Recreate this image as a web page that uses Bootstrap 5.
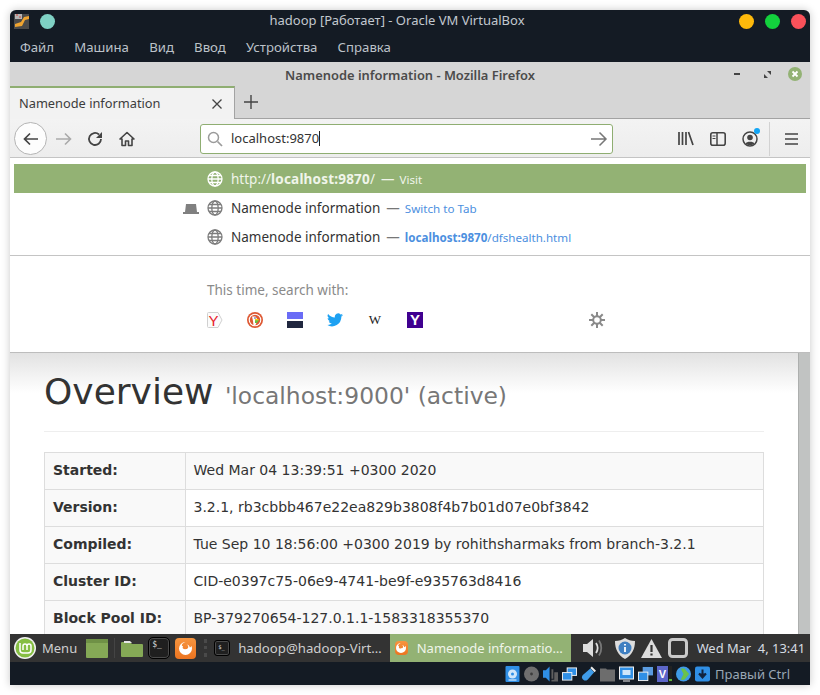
<!DOCTYPE html>
<html lang="en">
<head>
  <meta charset="UTF-8">
  <title>hadoop [Работает] - Oracle VM VirtualBox</title>
  <meta name="viewport" content="width=device-width, initial-scale=1">
  <link href="https://cdn.jsdelivr.net/npm/bootstrap@5.3.3/dist/css/bootstrap.min.css" rel="stylesheet">
  <style>
    html, body { height: 100%; }
    body { background: #fff; overflow: hidden; font-family: "Noto Sans", sans-serif; font-size: 13px; }
    svg { display: block; flex: none; }
    .vm-window { position: relative; width: 800px; height: 675px; margin: 10px; border-radius: 6px 6px 0 0; box-shadow: 0 0 9px rgba(0,0,0,.22); overflow: hidden; background: #141b24; }
    .vm-title { height: 26px; color: #c2c8cf; padding: 0 4px 3px; position: relative; }
    .vm-title-text { position: absolute; left: 0; right: 26px; top: 0; text-align: center; line-height: 20px; }
    .dot { width: 15px; height: 15px; border-radius: 50%; }
    .vm-menu { height: 26px; color: #bcc2c9; padding-left: 10px; gap: 20.2px; line-height: 22px; font-size: 13.2px; }
    .ff-title { height: 24px; background: #d6d6d6; color: #4b4b4b; font-weight: 600; position: relative; line-height: 26px; text-align: center; font-size: 12.9px; }
    .ff-ctrls { position: absolute; right: 8px; top: 5px; gap: 17px; }
    .ff-tabs { height: 33px; background: #d6d6d6; border-bottom: 1px solid #a3a3a3; }
    .ff-tab { width: 225px; height: 33px; background: #f2f2f2; border-top: 2px solid #8fae72; border-right: 1px solid #a3a3a3; padding: 0 12px 0 9px; color: #3c3c3c; font-size: 12.8px; }
    .ff-toolbar { height: 39px; background: linear-gradient(#f3f3f3, #ededed); border-bottom: 1px solid #c4c4c4; position: relative; padding: 1px 0 0 4px; }
    .back-btn { width: 33px; height: 33px; border-radius: 50%; border: 1px solid #b4b4b4; background: #fdfdfd; }
    .url-box { width: 413px; height: 30px; margin-left: 65px; background: #fff; border: 1px solid #8fae72; border-radius: 3px; padding: 0 4px 0 6px; color: #333; font-size: 13px; }
    .url-caret { display: inline-block; width: 1px; height: 15px; background: #222; vertical-align: -3px; }
    .tool-sep { width: 1px; height: 34px; background: #d2d2d2; }
    .ff-page { height: 476px; background: #fff; position: relative; overflow: hidden; }
    .page-scroll { position: absolute; right: 0; top: 0; bottom: 0; width: 12px; background: #c1c3c2; border-left: 1px solid #adafae; }
    .page-shade { height: 40px; background: linear-gradient(#e2e2e2, #fff); position: absolute; left: 0; right: 12px; top: 195px; }
    .page-body { position: absolute; left: 34px; width: 720px; top: 194px; font-family: "DejaVu Sans", sans-serif; color: #333; }
    .page-head { margin: 20px 0 20px; padding-bottom: 15px; border-bottom: 1px solid #eee; font-size: 36px; line-height: 40px; font-weight: 400; font-family: inherit; }
    .page-head small { font-size: 23.4px; color: #777; font-weight: 400; }
    .info-tbl { width: 720px; margin: 0; font-size: 14px; color: #333; table-layout: fixed; }
    .info-tbl th, .info-tbl td { border: 1px solid #ddd; padding: 7px 8px 9px; height: 37px; line-height: 20px; font-weight: 400; background: #fff; box-shadow: none; color: #333; }
    .info-tbl td { padding-left: 7.5px; }
    .info-tbl th { width: 141px; font-weight: 700; background: #f9f9f9; }
    .info-tbl tr:nth-child(odd) td { background: #f9f9f9; }
    .url-drop { position: absolute; left: 0; right: 0; top: 0; height: 195px; background: #fff; border-bottom: 1px solid #bdbdbd; padding: 6px 4px 0; z-index: 5; }
    .drop-row { height: 29px; padding-left: 193px; gap: 6px; color: #333; position: relative; font-size: 13.5px; }
    .drop-row > svg:not(.tab-ind) { margin-right: 2px; }
    .drop-row > span { margin-top: 2px; }
    .drop-row.is-on { background: #93b274; color: #f0f5ea; }
    .is-on b { letter-spacing: .2px; }
    .drop-dash { color: #777; font-size: 13.5px; }
    .is-on .drop-dash { color: #f0f5ea; }
    .drop-act { font-size: 11.6px; color: #4c8fe0; margin-left: -1px; }
    .is-on .drop-act { color: #f0f5ea; }
    .tab-ind { position: absolute; left: 169px; top: 11px; }
    .drop-sep { height: 1px; background: #c4c4c4; margin: 4px -4px 0; }
    .search-lbl { color: #8a8a8a; margin: 24px 0 0 193px; line-height: 20px; font-size: 13.5px; }
    .search-row { margin: 12px 0 0 193px; position: relative; width: 400px; gap: 24px; }
    .gear-ic { position: absolute; left: 382px; top: 0; }
    .wiki-g { width: 16px; height: 16px; font-family: "Liberation Serif", serif; font-size: 13px; line-height: 16px; text-align: center; color: #222; }
    .yahoo-g { width: 16px; height: 16px; background: #400090; color: #fff; font-weight: 700; line-height: 16px; text-align: center; font-size: 15px; font-family: "Liberation Sans", sans-serif; }
    .mint-panel { height: 28px; background: #333; color: #cfcfcf; position: relative; }
    .mint-panel span { margin-top: 2px; }
    .mint-task { height: 28px; padding: 0 8px 0 5px; gap: 8px; font-size: 13.2px; }
    .mint-task.is-active { background: #93b274; color: #f0f5ea; font-size: 13px; gap: 9px; }
    .mint-clock { position: absolute; right: 5px; top: 0; line-height: 28px; white-space: pre; color: #d6dce2; font-size: 12.9px; }
    .term-ic { background: #1f1f1f; border: 1px solid #000; border-radius: 5px; color: #ddd; font-family: "DejaVu Sans Mono", monospace; font-size: 8px; line-height: 8px; padding: 3px 0 0 3px; box-shadow: inset 0 0 0 1px #4a4a4a; }
    .term-ic.is-small { width: 16px; height: 16px; font-size: 5.5px; padding: 2px 0 0 3px; border-radius: 3px; }
    .ff-ic { border-radius: 4px; background: linear-gradient(#f7953f, #ec7420); }
    .vbox-status { height: 23px; color: #9aa7b4; padding-right: 20px; gap: 4px; }
    .vbox-status svg { width: 15px; height: 16px; }
    .vbox-status span { margin: 2px 0 0 1px; font-size: 13px; }
  </style>
</head>
<body>

  <div class="vm-window d-flex flex-column">

    <!-- VirtualBox title and menu -->
    <div class="vm-title d-flex align-items-center">
      <svg width="15" height="15" viewBox="0 0 15 15"><rect width="15" height="15" fill="#4a4a4a"/><rect x="1" y="0" width="7" height="5" fill="#b5b5b5"/><path d="M2 1h2M5 3h2" stroke="#d0453a"/><path d="M15 2 10 3 7 8 1 10v3l7-1 3-6 4-1z" fill="#efa430"/></svg>
      <div class="dot" style="background:#7fd1c4;margin-left:11px"></div>
      <div class="vm-title-text">hadoop [Работает] - Oracle VM VirtualBox</div>
      <div class="d-flex ms-auto" style="gap:11px;margin-right:.5px">
        <div class="dot" style="background:#fdb90b"></div>
        <div class="dot" style="background:#13d13d"></div>
        <div class="dot" style="background:#f9515a"></div>
      </div>
    </div>
    <div class="vm-menu d-flex">
      <span>Файл</span><span>Машина</span><span>Вид</span><span>Ввод</span><span>Устройства</span><span>Справка</span>
    </div>

    <!-- Firefox chrome -->
    <div class="ff-title">
      Namenode information - Mozilla Firefox
      <div class="ff-ctrls d-flex align-items-center">
        <svg width="13" height="14" viewBox="0 0 13 14"><rect x="0" y="6" width="6" height="2" fill="#444"/></svg>
        <svg width="7" height="7" viewBox="0 0 7 7"><path d="M3 0h4v4zM0 3l4 4H0z" fill="#444"/></svg>
        <svg width="14" height="14" viewBox="0 0 14 14"><circle cx="7" cy="7" r="7" fill="#93b274"/><path d="M4.500 4.500l5 5m0-5-5 5" stroke="#fff" stroke-width="1.800"/></svg>
      </div>
    </div>
    <div class="ff-tabs d-flex">
      <div class="ff-tab d-flex align-items-center justify-content-between">
        <span>Namenode information</span>
        <svg width="10" height="10" viewBox="0 0 10 10"><path d="M.5.5l9 9m0-9-9 9" stroke="#444" stroke-width="1.300"/></svg>
      </div>
      <svg class="align-self-center" style="margin-left:9px" width="14" height="14" viewBox="0 0 14 14"><path d="M7 0v14M0 7h14" stroke="#444" stroke-width="1.400"/></svg>
    </div>
    <div class="ff-toolbar d-flex align-items-center">
      <div class="back-btn d-flex align-items-center justify-content-center">
        <svg width="16" height="14" viewBox="0 0 16 14"><path d="M15 7H2M7 1.500 1.500 7 7 12.500" fill="none" stroke="#444" stroke-width="1.700"/></svg>
      </div>
      <svg class="ms-2" width="17" height="14" viewBox="0 0 17 14"><path d="M1 7h14M10 1.500 15.500 7 10 12.500" fill="none" stroke="#aaa" stroke-width="1.600"/></svg>
      <svg style="margin-left:15px" width="16" height="16" viewBox="0 0 16 16"><path d="M14 8a6 6 0 1 1-2-4.500" fill="none" stroke="#444" stroke-width="1.800"/><path d="M15 1v6H9z" fill="#444"/></svg>
      <svg style="margin-left:16px" width="16" height="16" viewBox="0 0 16 16"><path d="M8 1.500 1 8h2v6.500h3.500V10h3v4.500H13V8h2z" fill="none" stroke="#444" stroke-width="1.600" stroke-linejoin="round"/></svg>
      <div class="url-box d-flex align-items-center">
        <svg width="16" height="16" viewBox="0 0 16 16"><circle cx="6.500" cy="6.500" r="5" fill="none" stroke="#9b9b9b" stroke-width="1.500"/><path d="M10.500 10.500 15 15" stroke="#9b9b9b" stroke-width="1.700"/></svg>
        <span class="ms-2">localhost:9870<span class="url-caret"></span></span>
        <svg class="ms-auto" width="18" height="16" viewBox="0 0 18 16"><path d="M1 8h15M9.500 1.500 16 8l-6.500 6.500" fill="none" stroke="#777" stroke-width="1.500"/></svg>
      </div>
      <svg style="margin-left:65px" width="16" height="15" viewBox="0 0 16 15"><path d="M1 1v13M4.500 1v13M8 1v13M10.500 1l4.500 13" fill="none" stroke="#444" stroke-width="1.700"/></svg>
      <svg style="margin-left:16px" width="16" height="14" viewBox="0 0 16 14"><rect x=".8" y=".8" width="14.400" height="12.400" rx="2" fill="none" stroke="#444" stroke-width="1.600"/><path d="M7 1v12" stroke="#444" stroke-width="1.500"/><path d="M2.500 4h3M2.500 6.500h3" stroke="#444"/></svg>
      <div class="position-relative" style="margin-left:16px">
        <svg width="16" height="16" viewBox="0 0 16 16"><circle cx="8" cy="8" r="7" fill="none" stroke="#444" stroke-width="1.500"/><circle cx="8" cy="6.500" r="2.800" fill="#444"/><path d="M3.500 12.500c1-2.500 8-2.500 9 0-2 2-7 2-9 0z" fill="#444"/></svg>
        <span class="position-absolute" style="width:6px;height:6px;border-radius:50%;background:#12a5f5;left:12px;top:-3px"></span>
      </div>
      <div class="tool-sep" style="margin-left:11px"></div>
      <svg style="margin-left:15px" width="13" height="12" viewBox="0 0 13 12"><path d="M0 1h13M0 6h13M0 11h13" stroke="#444" stroke-width="1.700"/></svg>
    </div>

    <!-- Page behind the address bar dropdown -->
    <div class="ff-page">
      <div class="page-shade"></div>
      <div class="page-body">
        <h1 class="page-head">Overview <small>'localhost:9000' (active)</small></h1>
        <table class="table info-tbl">
          <tbody>
            <tr><th>Started:</th><td>Wed Mar 04 13:39:51 +0300 2020</td></tr>
            <tr><th>Version:</th><td>3.2.1, rb3cbbb467e22ea829b3808f4b7b01d07e0bf3842</td></tr>
            <tr><th>Compiled:</th><td>Tue Sep 10 18:56:00 +0300 2019 by rohithsharmaks from branch-3.2.1</td></tr>
            <tr><th>Cluster ID:</th><td>CID-e0397c75-06e9-4741-be9f-e935763d8416</td></tr>
            <tr><th>Block Pool ID:</th><td>BP-379270654-127.0.1.1-1583318355370</td></tr>
          </tbody>
        </table>
      </div>
      <div class="page-scroll"></div>

      <!-- Address bar results -->
      <div class="url-drop">
        <div class="drop-row is-on d-flex align-items-center">
          <svg width="16" height="16" viewBox="0 0 16 16"><g fill="none" stroke="#fff" stroke-width="1.300"><circle cx="8" cy="8" r="7"/><ellipse cx="8" cy="8" rx="3.200" ry="7"/><path d="M1 8h14M2 4.500h12M2 11.500h12"/></g></svg>
          <span>http://<b>localhost:9870</b>/</span><span class="drop-dash">—</span><span class="drop-act">Visit</span>
        </div>
        <div class="drop-row d-flex align-items-center">
          <svg class="tab-ind" width="16" height="10" viewBox="0 0 16 10"><path d="M3 0h10l1 8h2v2H0V8h2z" fill="#808080"/></svg>
          <svg width="16" height="16" viewBox="0 0 16 16"><g fill="none" stroke="#7d7d7d" stroke-width="1.300"><circle cx="8" cy="8" r="7"/><ellipse cx="8" cy="8" rx="3.200" ry="7"/><path d="M1 8h14M2 4.500h12M2 11.500h12"/></g></svg>
          <span>Namenode information</span><span class="drop-dash">—</span><span class="drop-act">Switch to Tab</span>
        </div>
        <div class="drop-row d-flex align-items-center">
          <svg width="16" height="16" viewBox="0 0 16 16"><g fill="none" stroke="#7d7d7d" stroke-width="1.300"><circle cx="8" cy="8" r="7"/><ellipse cx="8" cy="8" rx="3.200" ry="7"/><path d="M1 8h14M2 4.500h12M2 11.500h12"/></g></svg>
          <span>Namenode information</span><span class="drop-dash">—</span><span class="drop-act"><b>localhost:9870</b>/dfshealth.html</span>
        </div>
        <div class="drop-sep"></div>
        <div class="search-lbl">This time, search with:</div>
        <div class="search-row d-flex align-items-center">
          <svg width="16" height="16" viewBox="0 0 16 16"><path d="M1.500.5h9.500l4 7.500-4 7.500H1.500a1 1 0 0 1-1-1v-13a1 1 0 0 1 1-1z" fill="#fbfbfb" stroke="#d0d0d0"/><text x="6.500" y="13.500" text-anchor="middle" font-family="Liberation Sans, sans-serif" font-size="15" fill="#e8202a">Y</text></svg>
          <svg width="16" height="16" viewBox="0 0 16 16"><circle cx="8" cy="8" r="8" fill="#de5833"/><circle cx="8" cy="8" r="6.300" fill="#fff"/><circle cx="8" cy="8" r="5.200" fill="#de5833"/><path d="M5 4.500h3.500l2 3-1.500 4.500-1 1.500H6.500L6 9z" fill="#fff"/><circle cx="8" cy="6" r=".8" fill="#2d4f8e"/><path d="M8 8h4l-2 3H8z" fill="#65bc46"/><path d="M8 7h3.500v1.300H8z" fill="#fdd20a"/></svg>
          <svg width="16" height="16" viewBox="0 0 16 16"><rect width="16" height="7" fill="#6a6cf6"/><rect y="9" width="16" height="7" fill="#20273f"/></svg>
          <svg width="16" height="14" viewBox="0 0 24 20"><path d="M24 2.400c-.9.400-1.800.700-2.800.800 1-.600 1.800-1.600 2.200-2.700-1 .600-2 1-3.100 1.200A4.900 4.900 0 0 0 11.900 6.200C7.800 6 4.200 4 1.700.9a4.900 4.900 0 0 0 1.500 6.600c-.8 0-1.600-.2-2.200-.6 0 2.400 1.700 4.400 3.900 4.900-.7.200-1.500.2-2.200.1.600 2 2.400 3.400 4.600 3.400A9.900 9.900 0 0 1 0 17.300 14 14 0 0 0 21.500 4.900c1-.7 1.800-1.500 2.500-2.500z" fill="#1da1f2"/></svg>
          <div class="wiki-g">W</div>
          <div class="yahoo-g">Y</div>
          <svg class="gear-ic" width="16" height="16" viewBox="0 0 16 16"><g stroke="#8a8a8a" stroke-width="2"><path d="M8 0v16M0 8h16M2.300 2.300l11.400 11.400M13.700 2.300 2.300 13.700"/></g><circle cx="8" cy="8" r="4.800" fill="#8a8a8a"/><circle cx="8" cy="8" r="2.800" fill="#fff"/></svg>
        </div>
      </div>
    </div>

    <!-- Mint panel inside the guest -->
    <div class="mint-panel d-flex align-items-center">
      <svg class="ms-1" width="22" height="22" viewBox="0 0 22 22"><circle cx="11" cy="11" r="11" fill="#f2f2f2"/><circle cx="11" cy="11" r="9.500" fill="#86be43"/><path d="M6 6v7a3 3 0 0 0 3 3h5a3 3 0 0 0 3-3V9a2 2 0 0 0-4 0v4m0-4a2 2 0 0 0-4 0v4" fill="none" stroke="#fff" stroke-width="1.500"/></svg>
      <span style="margin-left:6px">Menu</span>
      <svg style="margin-left:9px" width="22" height="19" viewBox="0 0 22 19"><rect width="22" height="19" rx="1" fill="#85a956"/><rect width="22" height="4" fill="#6f9146"/></svg>
      <div style="width:1px;height:20px;background:#444;margin-left:6px"></div>
      <svg style="margin-left:6px" width="22" height="18" viewBox="0 0 22 18"><path d="M1 3h8l2 2h10a1 1 0 0 1 1 1v11a1 1 0 0 1-1 1H1a1 1 0 0 1-1-1V4a1 1 0 0 1 1-1z" fill="#85a956"/><path d="M3 2h6l2 2H3z" fill="#e6e6e6"/></svg>
      <div class="term-ic" style="margin-left:5px;width:22px;height:22px">$_</div>
      <div class="ff-ic d-flex align-items-center justify-content-center" style="margin-left:5px;width:21px;height:21px"><svg width="13" height="13" viewBox="0 0 13 13"><path d="M6.500 0A6.500 6.500 0 1 0 13 6.500c0-1-.3-2-.7-2.800-.2 1-.8 1.600-1.500 1.900C10.500 3.500 9 2.500 7.500 2.500 9 3 9.800 4.500 9 6c-1 1.500-4 1.500-5 .5C3.500 6 3.500 5 4 4 3 4 2.500 3.500 3 2.500 4 1 5 .5 6.500 0z" fill="#fff"/></svg></div>
      <div style="width:4px;height:18px;margin-left:8px;border-left:3px dotted #4a4a4a"></div>
      <div class="mint-task d-flex align-items-center" style="margin-left:1px">
        <div class="term-ic is-small">$_</div>
        <span>hadoop@hadoop-Virt…</span>
      </div>
      <div class="mint-task is-active d-flex align-items-center" style="width:181px">
        <div class="ff-ic d-flex align-items-center justify-content-center" style="width:14px;height:14px"><svg width="10" height="10" viewBox="0 0 13 13"><path d="M6.500 0A6.500 6.500 0 1 0 13 6.500c0-1-.3-2-.7-2.800-.2 1-.8 1.600-1.500 1.900C10.500 3.500 9 2.500 7.500 2.500 9 3 9.800 4.500 9 6c-1 1.500-4 1.500-5 .5C3.500 6 3.500 5 4 4 3 4 2.500 3.500 3 2.500 4 1 5 .5 6.500 0z" fill="#fff"/></svg></div>
        <span class="text-nowrap">Namenode informatio…</span>
      </div>
      <svg style="margin-left:12px" width="22" height="22" viewBox="0 0 22 22"><path d="M0 7h4l6-5v18l-6-5H0z" fill="#ddd"/><path d="M13 6c2 3 2 7 0 10" fill="none" stroke="#ddd" stroke-width="1.800"/><path d="M16 3.500c3 4 3 11 0 15" fill="none" stroke="#777" stroke-width="1.800"/></svg>
      <svg style="margin-left:10px" width="20" height="21" viewBox="0 0 20 21"><path d="M10 0c3 2 6 3 10 3 0 8-3 14-10 18C3 17 0 11 0 3c4 0 7-1 10-3z" fill="#ddd"/><circle cx="10" cy="10" r="6.500" fill="#3f7fc1"/><path d="M10 6v1.500M10 9v5" stroke="#fff" stroke-width="1.800"/></svg>
      <svg style="margin-left:6px" width="21" height="19" viewBox="0 0 21 19"><path d="M10.500 0 21 19H0z" fill="#ddd"/><path d="M10.500 6v7M10.500 14.500v2" stroke="#333" stroke-width="2.200"/></svg>
      <svg style="margin-left:6px" width="20" height="20" viewBox="0 0 20 20"><rect x="1.500" y="1.500" width="17" height="17" rx="3" fill="#333" stroke="#c9c9c9" stroke-width="3"/></svg>
      <div class="mint-clock">Wed Mar  4, 13:41</div>
    </div>

    <!-- VirtualBox status bar -->
    <div class="vbox-status d-flex align-items-center justify-content-end">
      <svg viewBox="0 0 14 16"><rect width="14" height="16" rx="1" fill="#2f8fe6"/><circle cx="7" cy="8" r="4.500" fill="#cfe6fa"/><circle cx="7" cy="8" r="1.500" fill="#2f8fe6"/><path d="M3 14h8" stroke="#fff"/></svg>
      <svg viewBox="0 0 16 16"><circle cx="8" cy="8" r="8" fill="#6f6f6f"/><circle cx="8" cy="8" r="1.500" fill="#3c3c3c"/></svg>
      <svg viewBox="0 0 16 16"><path d="M0 4h3l4-4v16l-4-4H0z" fill="#2f8fe6"/><path d="M9 3h2v10H9zM12 6h4v8h-4zM9 14h7v2H9z" fill="#5f5f5f"/></svg>
      <svg viewBox="0 0 16 14"><rect x="5.500" y=".5" width="10" height="8" fill="#2f8fe6" stroke="#f2f2f2"/><rect x=".5" y="5.500" width="10" height="8" fill="#2f8fe6" stroke="#f2f2f2"/></svg>
      <svg viewBox="0 0 16 16"><path d="M10 2l4 4-7 8c-2 2-5 1-6-2 0-1 0-2 1-3z" fill="#3f9be8"/><path d="M11.500 0 16 4.500 14.500 6 10 1.500z" fill="#eee"/></svg>
      <svg viewBox="0 0 15 15"><path d="M0 2h6l1 1h8v12H0z" fill="#6d6d6d"/></svg>
      <svg viewBox="0 0 15 15"><rect width="15" height="13" fill="#f2f2f2"/><rect x="1" y="1" width="13" height="11" fill="#2f8fe6"/><rect x="3.500" y="3.500" width="8" height="5" fill="#cfe6fa"/><path d="M4 14.500h7" stroke="#f2f2f2"/></svg>
      <svg viewBox="0 0 16 15"><rect x="5" y="0" width="11" height="9" fill="#5a9be0"/><rect x=".5" y="5.500" width="10" height="9" fill="#2f8fe6" stroke="#f2f2f2"/></svg>
      <svg viewBox="0 0 15 16"><rect width="11" height="16" fill="#5c66c9"/><text x="5.500" y="12" text-anchor="middle" font-family="Liberation Sans, sans-serif" font-weight="700" font-size="11" fill="#fff">V</text><rect x="12" y="0" width="3" height="16" fill="#222"/><rect x="12" y="13" width="3" height="2" fill="#5db63a"/></svg>
      <svg viewBox="0 0 16 16"><circle cx="8" cy="8" r="8" fill="#3f9be8"/><path d="M5 2h4l5 6-5 6H5l3-6z" fill="#6bc24a"/></svg>
      <svg viewBox="0 0 15 15"><rect width="15" height="15" rx="2" fill="#2f8fe6"/><path d="M7.500 3v5M4 7 7.500 11 11 7" fill="#12233f" stroke="#12233f" stroke-width="2"/></svg>
      <span>Правый Ctrl</span>
    </div>
  </div>

  <script src="https://cdn.jsdelivr.net/npm/bootstrap@5.3.3/dist/js/bootstrap.bundle.min.js"></script>
</body>
</html>
